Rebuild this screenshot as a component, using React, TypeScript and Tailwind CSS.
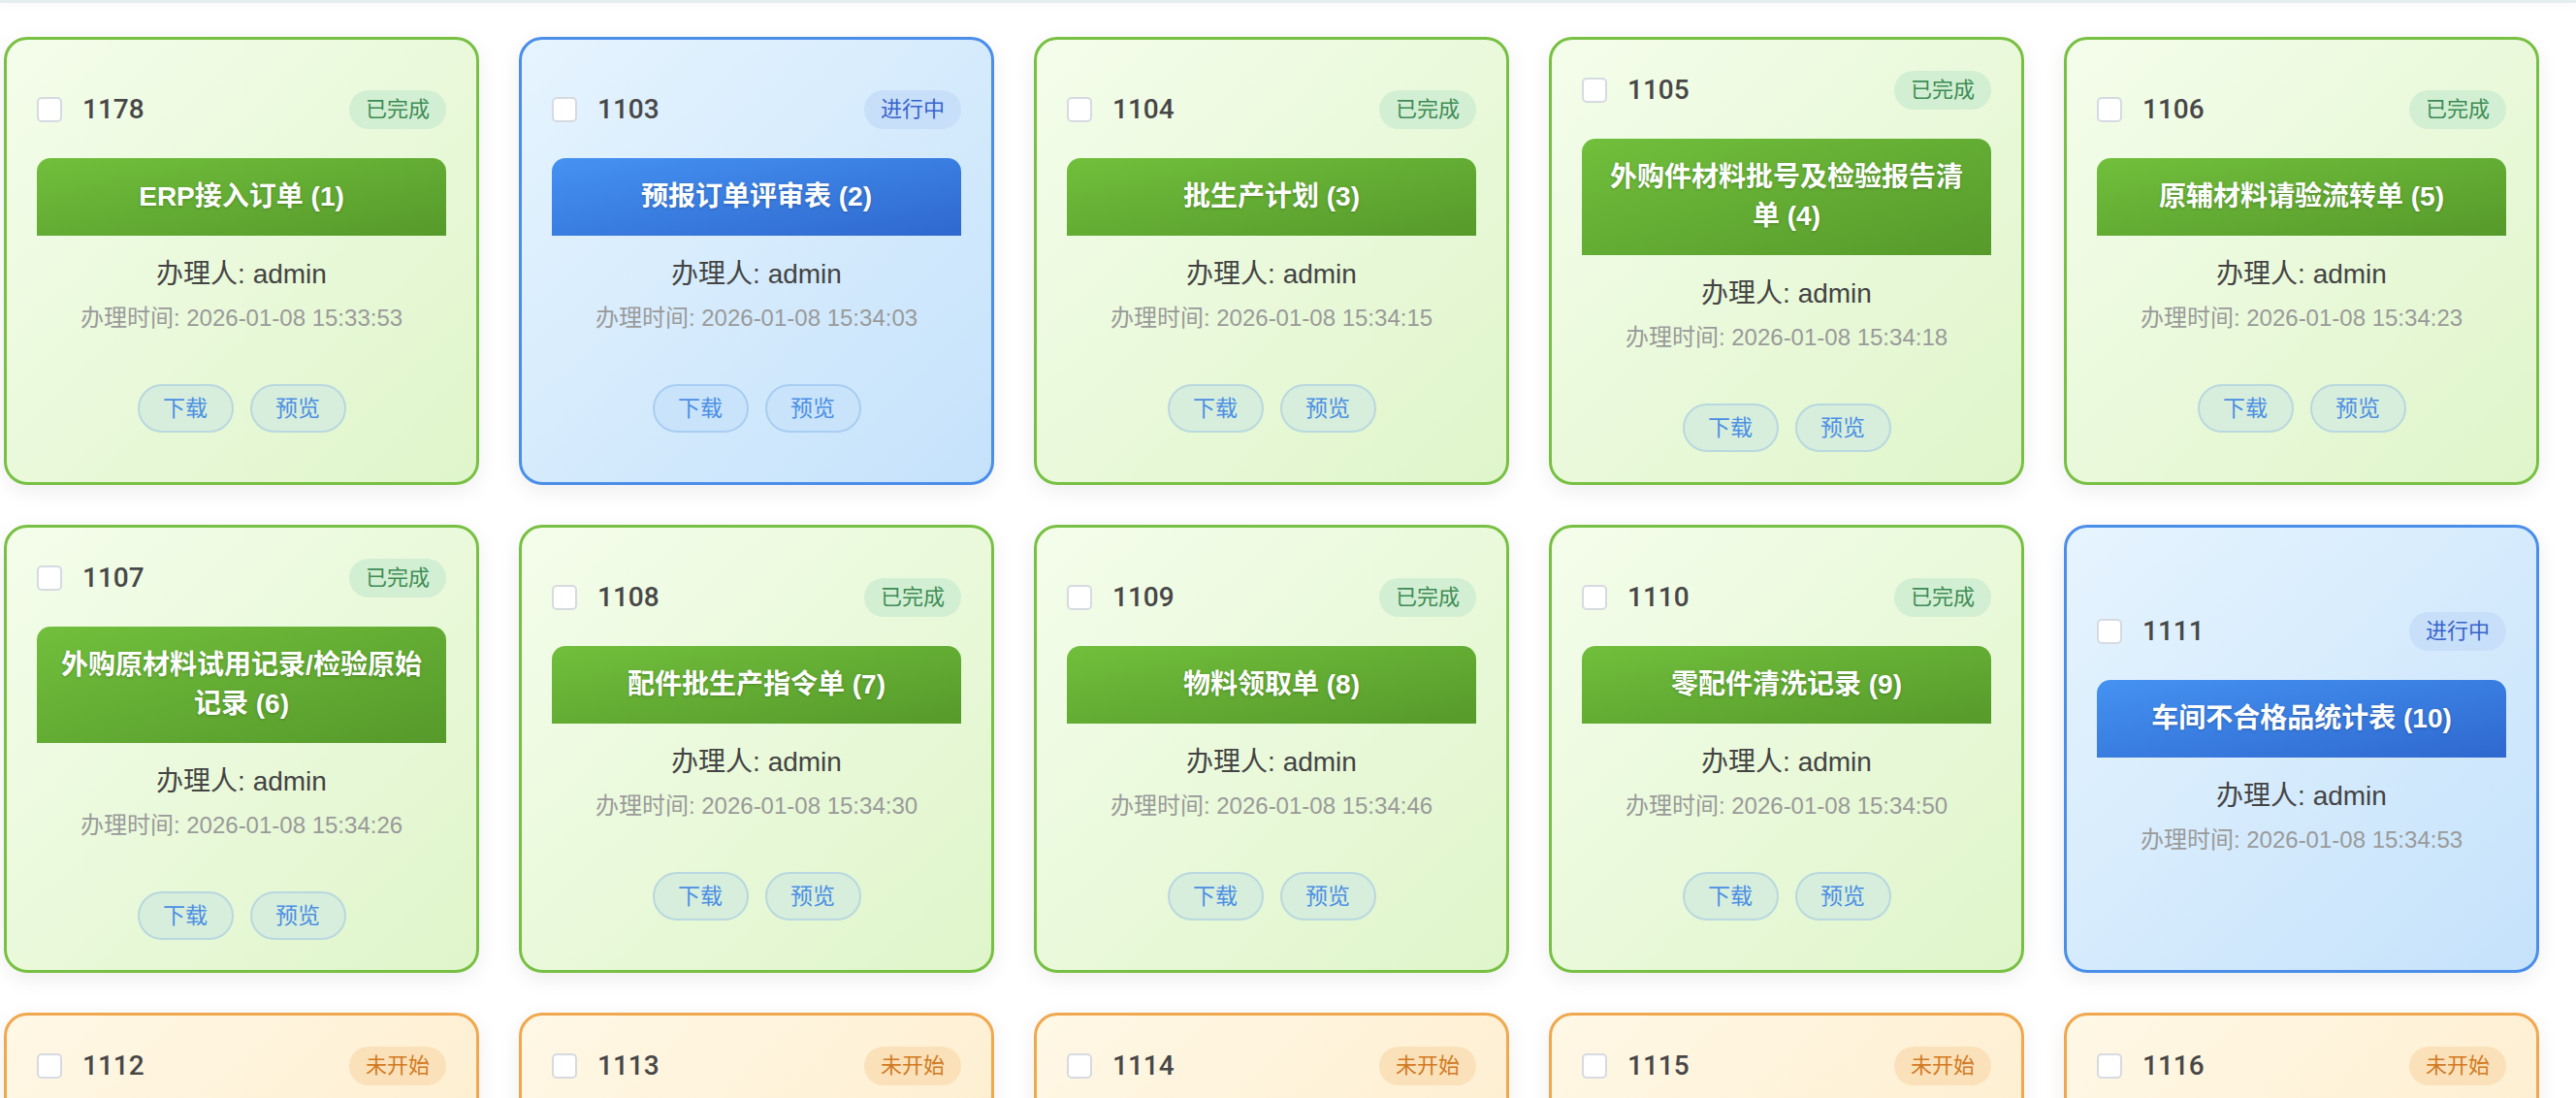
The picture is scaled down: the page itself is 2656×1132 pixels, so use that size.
import React from "react";

type Status = "done" | "progress" | "pending";

interface Item {
  id: number;
  title: string;
  status: Status;
  time: string;
  buttons: boolean;
}

const items: Item[] = [
  { id: 1178, title: "ERP接入订单 (1)", status: "done", time: "2026-01-08 15:33:53", buttons: true },
  { id: 1103, title: "预报订单评审表 (2)", status: "progress", time: "2026-01-08 15:34:03", buttons: true },
  { id: 1104, title: "批生产计划 (3)", status: "done", time: "2026-01-08 15:34:15", buttons: true },
  { id: 1105, title: "外购件材料批号及检验报告清单 (4)", status: "done", time: "2026-01-08 15:34:18", buttons: true },
  { id: 1106, title: "原辅材料请验流转单 (5)", status: "done", time: "2026-01-08 15:34:23", buttons: true },
  { id: 1107, title: "外购原材料试用记录/检验原始记录 (6)", status: "done", time: "2026-01-08 15:34:26", buttons: true },
  { id: 1108, title: "配件批生产指令单 (7)", status: "done", time: "2026-01-08 15:34:30", buttons: true },
  { id: 1109, title: "物料领取单 (8)", status: "done", time: "2026-01-08 15:34:46", buttons: true },
  { id: 1110, title: "零配件清洗记录 (9)", status: "done", time: "2026-01-08 15:34:50", buttons: true },
  { id: 1111, title: "车间不合格品统计表 (10)", status: "progress", time: "2026-01-08 15:34:53", buttons: false },
  { id: 1112, title: "半成品批生产记录及中间产品检验报告单 (11)", status: "pending", time: "2026-01-08 15:35:02", buttons: true },
  { id: 1113, title: "成品检验原始记录及成品检验报告书 (12)", status: "pending", time: "2026-01-08 15:35:08", buttons: true },
  { id: 1114, title: "成品入库单及成品库存台账登记表 (13)", status: "pending", time: "2026-01-08 15:35:11", buttons: true },
  { id: 1115, title: "产品出厂放行审核记录及放行单 (14)", status: "pending", time: "2026-01-08 15:35:17", buttons: true },
  { id: 1116, title: "销售发货记录及客户退货处理记录 (15)", status: "pending", time: "2026-01-08 15:35:20", buttons: true },
];

const cardStyle: Record<Status, string> = {
  done: "border-[#78c043] from-[#f4fdeb] to-[#dff5ca]",
  progress: "border-[#4a8eea] from-[#e6f4fe] to-[#c5e2fb]",
  pending: "border-[#f0a84e] from-[#fff8e6] to-[#fde9c4]",
};

const titleStyle: Record<Status, string> = {
  done: "from-[#71bf3c] to-[#569a2b]",
  progress: "from-[#4592f2] to-[#2f68cf]",
  pending: "from-[#f3b24f] to-[#e58f2a]",
};

const badgeStyle: Record<Status, string> = {
  done: "bg-[#d3efd3] text-[#3e8c55]",
  progress: "bg-[#c7dff9] text-[#3864cc]",
  pending: "bg-[#fbe1b9] text-[#d27a22]",
};

const badgeText: Record<Status, string> = {
  done: "已完成",
  progress: "进行中",
  pending: "未开始",
};

const btnStyle: Record<Status, string> = {
  done: "bg-[#d7eedc] border-[#b9d8df]",
  progress: "bg-[#c9e3fb] border-[#a9cdf3]",
  pending: "bg-[#f8ead2] border-[#e9d3b5]",
};

function Card({ item }: { item: Item }) {
  return (
    <div
      className={`flex h-[462px] flex-col justify-center rounded-[24px] border-[3px] bg-linear-to-br px-[31px] shadow-[0_6px_22px_rgba(0,0,0,0.07)] ${cardStyle[item.status]}`}
    >
      <div className="mb-[30px] flex h-[40px] items-center justify-between">
        <div className="flex items-center gap-[21px]">
          <input
            type="checkbox"
            className="m-0 h-[26px] w-[26px] appearance-none rounded-[5px] border-2 border-[#d6dae1] bg-white"
          />
          <span className="font-['Roboto','Liberation_Sans',sans-serif] text-[28px] font-medium leading-[40px] text-[#474747]">
            {item.id}
          </span>
        </div>
        <span
          className={`h-[40px] rounded-full px-[17px] text-[22px] leading-[40px] ${badgeStyle[item.status]}`}
        >
          {badgeText[item.status]}
        </span>
      </div>
      <div
        className={`rounded-t-[14px] bg-linear-to-br px-[20px] py-[20px] text-center text-[28px] font-bold leading-[40px] text-white [text-shadow:0_1px_3px_rgba(0,0,0,0.22)] ${titleStyle[item.status]}`}
      >
        {item.title}
      </div>
      <div className="mt-[20px] text-center text-[28px] leading-[40px] text-[#444]">办理人: admin</div>
      <div className="mt-[8px] text-center text-[24px] leading-[34px] text-[#9a9a9a]">办理时间: {item.time}</div>
      {item.buttons ? (
        <div className="mt-[51px] flex justify-center gap-[17px]">
          <button
            className={`h-[50px] w-[99px] rounded-full border-2 text-[23px] leading-[46px] text-[#4b8fe4] ${btnStyle[item.status]}`}
          >
            下载
          </button>
          <button
            className={`h-[50px] w-[99px] rounded-full border-2 text-[23px] leading-[46px] text-[#4b8fe4] ${btnStyle[item.status]}`}
          >
            预览
          </button>
        </div>
      ) : (
        <div className="h-[30px]" />
      )}
    </div>
  );
}

export default function App() {
  return (
    <div className="min-h-screen bg-white font-['Liberation_Sans','Noto_Sans_CJK_SC',sans-serif]">
      <div className="h-[3px] bg-[#e4eded] shadow-[0_2px_8px_rgba(0,0,0,0.06)]" />
      <div className="grid grid-cols-[repeat(5,490px)] gap-x-[41px] gap-y-[41px] pl-[4px] pt-[35px] pb-[40px]">
        {items.map((it) => (
          <Card key={it.id} item={it} />
        ))}
      </div>
    </div>
  );
}
